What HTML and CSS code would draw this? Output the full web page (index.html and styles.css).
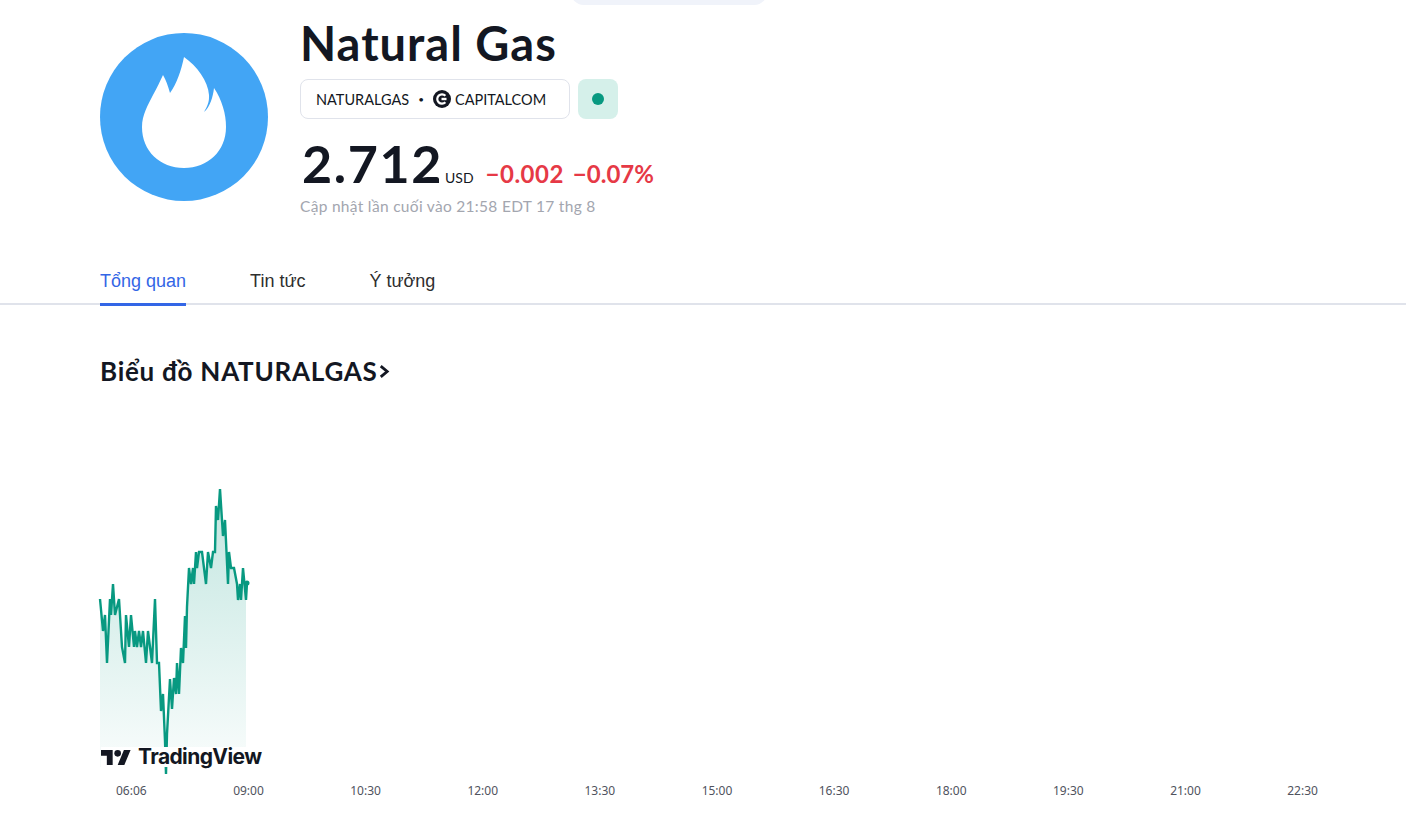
FILE: index.html
```html
<!DOCTYPE html>
<html lang="vi">
<head>
<meta charset="utf-8">
<title>Natural Gas</title>
<link rel="stylesheet" href="styles.css">
</head>
<body>
<div class="top-pill"></div>
<header class="head">
  <div class="logo">
    <svg viewBox="0 0 168 168" width="168" height="168"><circle cx="84" cy="84" r="84" fill="#42a5f5"/><path fill="#fff" d="M84 24C97 33 108 48 109 62C109.500 69 107 74 104 79C110 74 113 64 114 55C122 67 126 81 126 94C126 118 108 135 84 135C60 135 42 118 42 94C42 82 48 72 53 62C57 55 60 48 63 42C66 47 68 53 70 60C77 50 81 38 84 24Z"/></svg>
  </div>
  <div class="info">
    <h1 class="title">Natural Gas</h1>
    <div class="chips">
      <div class="symbol"><span>NATURALGAS</span><span class="dot">•</span><svg class="cap" viewBox="0 0 18 18" width="18" height="18"><circle cx="9" cy="9" r="9" fill="#131722"/><path fill="none" stroke="#fff" stroke-width="2.200" d="M12.400 5.800A4.700 4.700 0 1 0 12.400 12.200"/><path fill="#fff" d="M8.500 7.800h5v2.400h-5z"/></svg><span>CAPITALCOM</span></div>
      <div class="status"><i></i></div>
    </div>
    <div class="price-row"><span class="price">2.712</span><span class="cur">USD</span><span class="chg">−0.002</span><span class="chg pct">−0.07%</span></div>
    <div class="updated">Cập nhật lần cuối vào 21:58 EDT 17 thg 8</div>
  </div>
</header>
<nav class="tabs">
  <a class="tab active">Tổng quan</a>
  <a class="tab">Tin tức</a>
  <a class="tab">Ý tưởng</a>
</nav>
<h2 class="section">Biểu đồ NATURALGAS<svg viewBox="0 0 10 14" width="11" height="15"><path fill="none" stroke="#131722" stroke-width="2.600" d="M1.500 2l6 5-6 5"/></svg></h2>
<section class="chart">
  <svg class="plot" viewBox="100 468 150 306" width="150" height="306">
    <defs><linearGradient id="fill" gradientUnits="userSpaceOnUse" x1="0" y1="488" x2="0" y2="760"><stop offset="0" stop-color="#089981" stop-opacity=".25"/><stop offset="1" stop-color="#089981" stop-opacity=".03"/></linearGradient></defs>
    <path fill="url(#fill)" d="M100 598L103 630 105 614 107 662 110 598 111 614 113 583 115 614 119 598 122 646 125 662 126 614 129 646 131 614 134 646 135 630 137 646 139 630 141 646 143 630 146 662 148 630 150 646 152 662 155 598 157 662 159 662 161 710 163 693 165 740 166 773 167 733 170 678 172 708 174 677 176 693 177 662 179 693 181 647 183 662 185 615 186 647 187 606 189 567 191 583 193 567 194 583 196 551 197 567 199 551 202 551 206 583 208 551 211 567 213 551 215 551 216 505 218 519 220 488 223 535 225 519 228 583 229 551 231 567 234 567 237 583 238 599 240 583 241 599 243 567 246 599 246 766 100 766Z"/>
    <path fill="none" stroke="#089981" stroke-width="2.400" stroke-linejoin="miter" stroke-miterlimit="3" d="M100 598L103 630 105 614 107 662 110 598 111 614 113 583 115 614 119 598 122 646 125 662 126 614 129 646 131 614 134 646 135 630 137 646 139 630 141 646 143 630 146 662 148 630 150 646 152 662 155 598 157 662 159 662 161 710 163 693 165 740 166 773 167 733 170 678 172 708 174 677 176 693 177 662 179 693 181 647 183 662 185 615 186 647 187 606 189 567 191 583 193 567 194 583 196 551 197 567 199 551 202 551 206 583 208 551 211 567 213 551 215 551 216 505 218 519 220 488 223 535 225 519 228 583 229 551 231 567 234 567 237 583 238 599 240 583 241 599 243 567 246 599 247 582"/>
    <circle cx="247" cy="582" r="2.500" fill="#089981"/>
  </svg>
  <div class="tv"><svg viewBox="0 4 36 18" width="30" height="15"><path fill="#131722" d="M14 22H7V11H0V4h14v18zM28 22h-8l7.500-18h8L28 22z"/><circle cx="20" cy="8" r="4" fill="#131722"/></svg><span>TradingView</span></div>
  <div class="axis"><span>06:06</span><span>09:00</span><span>10:30</span><span>12:00</span><span>13:30</span><span>15:00</span><span>16:30</span><span>18:00</span><span>19:30</span><span>21:00</span><span>22:30</span></div>
</section>
</body>
</html>
```
FILE: styles.css
```css
* { box-sizing: border-box; }
html, body { margin: 0; padding: 0; background: #fff; height: 826px; overflow: hidden; }
body { font-family: Lato, "Noto Sans", sans-serif; color: #131722; position: relative; }
.top-pill { position: absolute; left: 571px; top: -20px; width: 196px; height: 25px; border-radius: 14px; background: #f0f3fa; }
.head { display: flex; gap: 32px; padding: 18px 100px 0; height: 266px; }
.logo { margin-top: 15px; height: 168px; }
.logo svg { display: block; }
.title { margin: 0; font-size: 47px; line-height: 50px; font-weight: 700; letter-spacing: 1px; white-space: nowrap; }
.chips { display: flex; gap: 8px; margin-top: 11px; }
.symbol { display: flex; align-items: center; width: 270px; height: 40px; padding: 0 15px; border: 1px solid #e0e3eb; border-radius: 8px; font-size: 14.500px; }
.dot { margin: 0 9px; font-size: 10px; }
.cap { margin-right: 4px; }
.status { display: flex; align-items: center; justify-content: center; width: 40px; height: 40px; border-radius: 8px; background: #d5f0ea; }
.status i { width: 12px; height: 12px; border-radius: 50%; background: #089981; }
.price-row { display: flex; align-items: baseline; margin-top: 16px; height: 56px; }
.price { font-size: 52px; line-height: 56px; font-weight: 700; margin-left: 2px; letter-spacing: 1.600px; }
.cur { font-size: 14px; margin-left: 2px; margin-right: 12px; }
.chg { font-size: 24px; font-weight: 700; color: #e63946; margin-right: 9px; letter-spacing: .5px; }
.pct { letter-spacing: 0; }
.updated { font-size: 15.500px; line-height: 20px; color: #a3a6af; margin-top: 5px; white-space: nowrap; letter-spacing: .3px; }
.tabs { display: flex; gap: 64px; padding: 0 100px; height: 39px; border-bottom: 2px solid #e0e3eb; }
.tab { height: 40px; padding-top: 1px; font: 18px/28px "Liberation Sans", Arial, sans-serif; color: #2e2e2e; white-space: nowrap; }
.tab.active { color: #3366e6; border-bottom: 3px solid #3366e6; }
.section { margin: 48px 0 0 100px; font-size: 26px; line-height: 36px; font-weight: 700; display: flex; align-items: center; gap: 1px; letter-spacing: .75px; white-space: nowrap; }
.chart { position: relative; padding-top: 80px; }
.plot { display: block; margin-left: 100px; overflow: visible; }
.tv { position: absolute; left: 101px; top: 358px; height: 20px; display: flex; align-items: center; gap: 7px; background: #fff; font: 700 21px/20px Inter, sans-serif; letter-spacing: -.6px; }
.axis { display: flex; justify-content: space-between; margin: 7px 88px 0 116px; font: 12px/18px "Noto Sans", sans-serif; color: #50535e; }
```
